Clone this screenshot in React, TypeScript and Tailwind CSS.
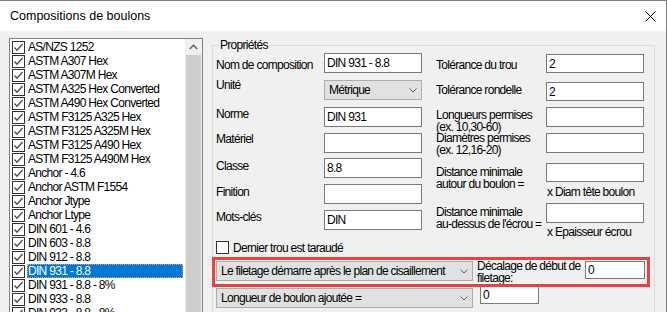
import React from "react";

const boulons = [
  "AS/NZS 1252",
  "ASTM A307 Hex",
  "ASTM A307M Hex",
  "ASTM A325 Hex Converted",
  "ASTM A490 Hex Converted",
  "ASTM F3125 A325 Hex",
  "ASTM F3125 A325M Hex",
  "ASTM F3125 A490 Hex",
  "ASTM F3125 A490M Hex",
  "Anchor - 4.6",
  "Anchor ASTM F1554",
  "Anchor Jtype",
  "Anchor Ltype",
  "DIN 601 - 4.6",
  "DIN 603 - 8.8",
  "DIN 912 - 8.8",
  "DIN 931 - 8.8",
  "DIN 931 - 8.8 - 8%",
  "DIN 933 - 8.8",
  "DIN 933 - 8.8 - 8%",
];

const leftRows = [
  { label: "Nom de composition", value: "DIN 931 - 8.8", h: "h-[27px]", mt: "mt-[5px]" },
  { label: "Unité", value: "Métrique", select: true, h: "h-[27px]", mt: "-mt-[2px]" },
  { label: "Norme", value: "DIN 931", h: "h-[26px]", mt: "mt-0" },
  { label: "Matériel", value: "", h: "h-[25px]", mt: "-mt-[1px]" },
  { label: "Classe", value: "8.8", h: "h-[26px]", mt: "mt-[1px]" },
  { label: "Finition", value: "", h: "h-[26px]", mt: "mt-[1px]" },
  { label: "Mots-clés", value: "DIN", h: "h-[26px]", mt: "mt-0" },
];

const Chevron = () => (
  <svg width="8" height="5" viewBox="0 0 8 5">
    <path d="M0.5 0.5 L4 4 L7.5 0.5" fill="none" stroke="#606060" strokeWidth="1" />
  </svg>
);

const ListCheck = () => (
  <svg width="13" height="13" viewBox="0 0 13 13" className="shrink-0">
    <rect x="0.5" y="0.5" width="12" height="12" fill="white" stroke="#333" />
    <path d="M2.5 6.5 L5 9.2 L10.5 3" fill="none" stroke="#4a4a4a" strokeWidth="1.3" />
  </svg>
);

const Input = ({ value = "", cls = "w-[98px] h-[20px]" }: { value?: string; cls?: string }) => (
  <div className={`${cls} shrink-0 border border-[#7a7a7a] bg-white pl-[2px] flex items-center leading-[14px]`}>
    {value}
  </div>
);

const Select = ({ value, cls }: { value: string; cls: string }) => (
  <div className={`${cls} shrink-0 border border-[#adadad] bg-[#e1e1e1] pl-[4px] pr-[4px] flex items-center justify-between leading-[14px]`}>
    <span className="whitespace-nowrap">{value}</span>
    <Chevron />
  </div>
);

export default function App() {
  return (
    <div className="w-[667px] h-[312px] overflow-hidden flex flex-col border-t border-r border-[#7a7a7a] bg-[#f0f0f0] text-black text-[12px] tracking-[-0.7px] font-['Liberation_Sans',Arial,sans-serif]">
      {/* barre de titre */}
      <div className="h-[30px] shrink-0 bg-white flex items-center justify-between pl-[10px] pr-[10px]">
        <span className="text-[12.5px] tracking-normal">Compositions de boulons</span>
        <svg width="11" height="11" viewBox="0 0 11 11">
          <path d="M0.5 0.5 L10.5 10.5 M10.5 0.5 L0.5 10.5" stroke="#000" strokeWidth="1" />
        </svg>
      </div>

      <div className="flex-1 flex pl-[9px] pt-[7px]">
        {/* liste */}
        <div className="w-[194px] h-[300px] shrink-0 border border-[#828282] bg-white flex">
          <div className="flex-1 flex flex-col pl-[2px] pt-[1px]">
            {boulons.map((b) => {
              const sel = b === "DIN 931 - 8.8";
              return (
                <div key={b} className="h-[14px] shrink-0 flex items-center gap-[2px]">
                  <ListCheck />
                  {sel ? (
                    <span className="flex-1 mr-[2px] h-[14px] bg-[#0078d7] text-white border border-dotted border-[#f2a54a] leading-[12px] whitespace-nowrap">
                      {b}
                    </span>
                  ) : (
                    <span className="pl-[1px] leading-[14px] whitespace-nowrap">{b}</span>
                  )}
                </div>
              );
            })}
          </div>
          <div className="w-[17px] shrink-0 bg-[#f0f0f0] flex flex-col">
            <div className="h-[16px] flex items-center justify-center">
              <svg width="9" height="6" viewBox="0 0 9 6">
                <path d="M0.8 5 L4.5 1.3 L8.2 5" fill="none" stroke="#606060" strokeWidth="1.5" />
              </svg>
            </div>
            <div className="flex-1 mx-[1px] bg-[#cdcdcd]" />
          </div>
        </div>

        {/* Propriétés */}
        <div className="relative ml-[9px] mt-[7px] w-[443px] h-[300px] shrink-0 border border-[#dcdcdc] pl-[3px] pt-[7px]">
          <span className="absolute -top-[8px] left-[6px] px-[1px] bg-[#f0f0f0] leading-[14px]">Propriétés</span>

          <div className="flex h-[188px]">
            <div className="w-[206px] flex flex-col">
              {leftRows.map((r) => (
                <div key={r.label} className={`${r.h} flex items-start`}>
                  <span className={`w-[108px] leading-[14px] whitespace-nowrap ${r.mt}`}>{r.label}</span>
                  {r.select ? <Select value={r.value} cls="w-[98px] h-[20px]" /> : <Input value={r.value} />}
                </div>
              ))}
            </div>

            <div className="ml-[14px] mt-[1px] flex flex-col">
              <div className="h-[28px] flex items-start">
                <span className="w-[110px] mt-[4px] leading-[14px] whitespace-nowrap">Tolérance du trou</span>
                <Input value="2" cls="w-[98px] h-[19px]" />
              </div>
              <div className="h-[25px] flex items-start">
                <span className="w-[110px] mt-[1px] leading-[14px] whitespace-nowrap">Tolérance rondelle</span>
                <Input value="2" cls="w-[98px] h-[19px]" />
              </div>
              <div className="h-[26px] flex items-start">
                <span className="w-[110px] mt-[2px] leading-[12px] whitespace-nowrap">
                  Longueurs permises
                  <br />
                  (ex. 10,30-60)
                </span>
                <Input />
              </div>
              <div className="h-[30px] flex items-start">
                <span className="w-[110px] -mt-[1px] leading-[12px] whitespace-nowrap">
                  Diamètres permises
                  <br />
                  (ex. 12,16-20)
                </span>
                <Input />
              </div>
              <div className="h-[40px] flex items-start">
                <span className="w-[110px] mt-[3px] leading-[12px] whitespace-nowrap">
                  Distance minimale
                  <br />
                  autour du boulon =
                </span>
                <div className="flex flex-col">
                  <Input cls="w-[98px] h-[19px]" />
                  <span className="mt-[4px] pl-[1px] leading-[12px] whitespace-nowrap">x Diam tête boulon</span>
                </div>
              </div>
              <div className="flex items-start">
                <span className="w-[110px] mt-[3px] leading-[12px] whitespace-nowrap">
                  Distance minimale
                  <br />
                  au-dessus de l'écrou =
                </span>
                <div className="flex flex-col">
                  <Input />
                  <span className="mt-[3px] pl-[1px] leading-[12px] whitespace-nowrap">x Epaisseur écrou</span>
                </div>
              </div>
            </div>
          </div>

          <div className="h-[13px] flex items-center gap-[4px]">
            <div className="w-[13px] h-[13px] border border-[#333] bg-white" />
            <span className="leading-[14px]">Dernier trou est taraudé</span>
          </div>

          <div className="relative mt-[7px] w-[430px] h-[22px] flex items-start">
            <Select value="Le filetage démarre après le plan de cisaillement" cls="w-[257px] h-[20px]" />
            <span className="ml-[4px] w-[108px] -mt-[1px] leading-[12px] whitespace-nowrap">
              Décalage de début de
              <br />
              filetage:
            </span>
            <Input value="0" cls="w-[60px] h-[18px]" />
            <div className="absolute -inset-[4px] border-[3px] border-[#e84141] pointer-events-none" />
          </div>

          <div className="mt-[5px] flex items-start">
            <Select value="Longueur de boulon ajoutée =" cls="w-[257px] h-[20px]" />
            <Input value="0" cls="ml-[7px] -mt-[2px] w-[59px] h-[18px]" />
          </div>
        </div>
      </div>
    </div>
  );
}
